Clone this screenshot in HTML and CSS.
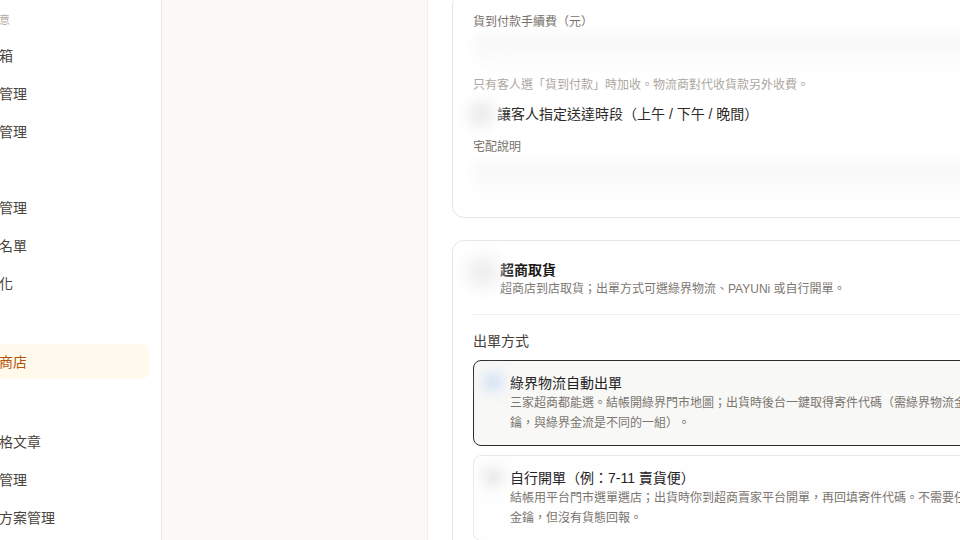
FILE: index.html
```html
<!DOCTYPE html>
<html lang="zh-Hant">
<head>
<meta charset="utf-8">
<title>物流設定</title>
<link rel="stylesheet" href="styles.css">
</head>
<body>
<div class="app">
  <aside class="sidebar">
    <div class="group">
      <div class="group-title">顧客滿意</div>
      <a class="nav-item">留言箱</a>
      <a class="nav-item">訂單管理</a>
      <a class="nav-item">商品管理</a>
    </div>
    <div class="group">
      <div class="group-title">會員</div>
      <a class="nav-item">會員管理</a>
      <a class="nav-item">封鎖名單</a>
      <a class="nav-item">在地化</a>
    </div>
    <div class="group">
      <div class="group-title">商店</div>
      <a class="nav-item active">我的商店</a>
    </div>
    <div class="group">
      <div class="group-title">內容</div>
      <a class="nav-item">部落格文章</a>
      <a class="nav-item">頁面管理</a>
      <a class="nav-item">訂閱方案管理</a>
    </div>
  </aside>
  <main class="main">
    <div class="panel">
      <section class="card card-home">
        <label class="field-label">貨到付款手續費（元）</label>
        <div class="input"></div>
        <p class="hint">只有客人選「貨到付款」時加收。物流商對代收貨款另外收費。</p>
        <label class="check-row"><span class="checkbox"></span><span>讓客人指定送達時段（上午 / 下午 / 晚間）</span></label>
        <label class="field-label field-gap">宅配說明</label>
        <div class="textarea"></div>
      </section>
      <section class="card card-cvs">
        <header class="card-head">
          <span class="toggle"></span>
          <div class="head-text">
            <h3>超商取貨</h3>
            <p>超商店到店取貨；出單方式可選綠界物流、PAYUNi 或自行開單。</p>
          </div>
        </header>
        <div class="section-label">出單方式</div>
        <div class="options">
          <div class="option selected">
            <span class="radio radio-on"></span>
            <div class="option-text">
              <div class="option-title">綠界物流自動出單</div>
              <div class="option-desc">三家超商都能選。結帳開綠界門市地圖；出貨時後台一鍵取得寄件代碼（需綠界物流金鑰，與綠界金流是不同的一組）。</div>
            </div>
          </div>
          <div class="option">
            <span class="radio"></span>
            <div class="option-text">
              <div class="option-title">自行開單（例：7-11 賣貨便）</div>
              <div class="option-desc">結帳用平台門市選單選店；出貨時你到超商賣家平台開單，再回填寄件代碼。不需要任何金鑰，但沒有貨態回報。</div>
            </div>
          </div>
        </div>
      </section>
    </div>
  </main>
</div>
</body>
</html>
```
FILE: styles.css
```css
* { box-sizing: border-box; margin: 0; padding: 0; }
html, body { width: 960px; height: 540px; overflow: hidden; }
body {
  font-family: "Liberation Sans", "Noto Sans CJK TC", sans-serif;
  background: #faf9f7;
  color: #292524;
  text-spacing-trim: space-all;
}
.app { display: flex; height: 540px; }

/* sidebar */
.sidebar {
  flex: none;
  width: 230px;
  margin-left: -68px;
  background: #fff;
  border-right: 1px solid #e9e7e4;
  padding: 12px 12px 0;
}
.group + .group { margin-top: 20px; }
.group:nth-child(2) { margin-top: 16.5px; }
.group:nth-child(3) { margin-top: 18px; }
.group-title {
  font-size: 11px;
  line-height: 16px;
  color: #b3ada6;
  padding-left: 22px;
  margin-bottom: 9px;
}
.nav-item {
  display: flex;
  align-items: center;
  height: 35px;
  padding-left: 27px;
  font-size: 14px;
  color: #4a4540;
  border-radius: 8px;
}
.nav-item + .nav-item { margin-top: 3px; }
.nav-item.active { background: #fffaeb; color: #b4530f; }

/* main */
.main { flex: none; display: flex; padding-left: 265px; }
.panel {
  width: 620px;
  background: #fff;
  border-left: 1px solid #efeeec;
  padding: 0 24px;
}
.card {
  background: #fff;
  border: 1px solid #e7e5e2;
  border-radius: 12px;
  padding: 20px;
}
.card-home { margin-top: -7px; }
.card-cvs { margin-top: 22px; padding-top: 19px; }

.field-label {
  display: block;
  font-size: 12px;
  line-height: 16px;
  color: #767069;
}
.field-gap { margin-top: 15px; }
.input, .textarea {
  border-radius: 8px;
  background: linear-gradient(#f7f7f6, #fdfdfd);
  filter: blur(6px);
}
.input { margin-top: 4px; height: 33px; }
.textarea { margin-top: 6px; height: 36px; }
.hint {
  margin-top: 10px;
  font-size: 12px;
  line-height: 16px;
  color: #aca7a1;
}
.check-row {
  margin-top: 11px;
  display: flex;
  align-items: center;
  gap: 8px;
  font-size: 14px;
  line-height: 20px;
  color: #2d2a27;
}
.checkbox {
  flex: none;
  width: 16px;
  height: 16px;
  border-radius: 4px;
  background: #ededed;
  box-shadow: 0 0 10px 7px #f3f3f3;
  filter: blur(5px);
}

/* card 2 */
.card-head {
  display: flex;
  gap: 7px;
  padding-bottom: 16px;
  border-bottom: 1px solid #f0efed;
}
.toggle {
  flex: none;
  width: 20px;
  height: 20px;
  margin-top: 2px;
  border-radius: 50%;
  background: #eeeeee;
  box-shadow: 0 0 12px 9px #f4f4f4;
  filter: blur(6px);
}
.head-text h3 {
  font-size: 14px;
  line-height: 20px;
  font-weight: 700;
  color: #1c1a18;
}
.head-text p {
  font-size: 12px;
  line-height: 18px;
  color: #7d7872;
}
.section-label {
  margin-top: 16px;
  font-size: 14px;
  line-height: 20px;
  color: #44403c;
}
.options { margin-top: 9px; display: flex; flex-direction: column; gap: 9px; }
.option {
  display: flex;
  gap: 10px;
  padding: 12px 16px 12px 12px;
  border: 1px solid #eceae7;
  border-radius: 8px;
  background: #fefefe;
}
.option.selected { border-color: #2e2d2b; background: #f8f8f6; }
.radio {
  flex: none;
  width: 14px;
  height: 14px;
  margin-top: 2px;
  border-radius: 50%;
  background: #eaeaea;
  box-shadow: 0 0 8px 6px #f2f2f2;
  filter: blur(4px);
}
.radio-on { background: #d6e4f4; box-shadow: 0 0 8px 6px #e4edf8; }
.option-text { min-width: 0; }
.option-title { font-size: 14px; line-height: 20px; color: #24211f; }
.option-desc { font-size: 12px; line-height: 20px; color: #7a756f; }
```
